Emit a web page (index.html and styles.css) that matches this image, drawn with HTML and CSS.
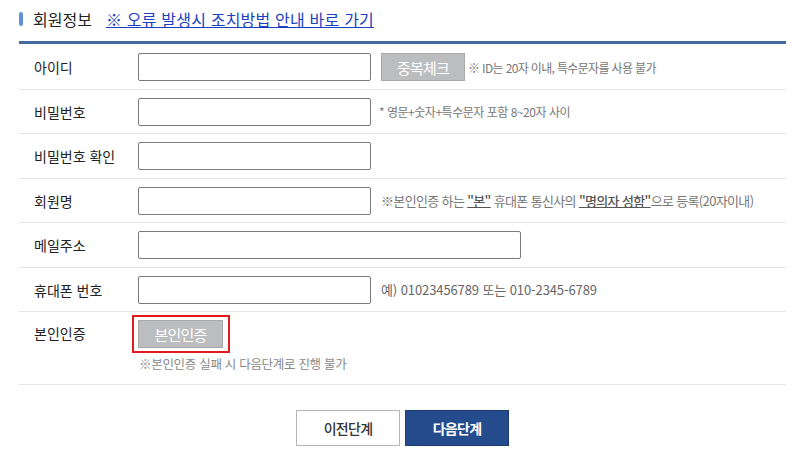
FILE: index.html
```html
<!DOCTYPE html>
<html lang="ko">
<head>
<meta charset="utf-8">
<link rel="stylesheet" href="styles.css">
</head>
<body>
<div class="wrap">
  <div class="head">
    <span class="pill"></span>
    <h2 class="title">회원정보</h2>
    <a class="help" href="#">※ 오류 발생시 조치방법 안내 바로 가기</a>
  </div>
  <div class="form">
    <div class="row first">
      <div class="label">아이디</div>
      <div class="field">
        <input class="inp" type="text">
        <button class="gbtn">중복체크</button>
        <span class="hint sm">※ ID는 20자 이내, 특수문자를 사용 불가</span>
      </div>
    </div>
    <div class="row">
      <div class="label">비밀번호</div>
      <div class="field">
        <input class="inp" type="password">
        <span class="hint sm">* 영문+숫자+특수문자 포함 8~20자 사이</span>
      </div>
    </div>
    <div class="row">
      <div class="label">비밀번호 확인</div>
      <div class="field">
        <input class="inp" type="password">
      </div>
    </div>
    <div class="row">
      <div class="label">회원명</div>
      <div class="field">
        <input class="inp" type="text">
        <span class="hint">※본인인증 하는 <b class="em">"본"</b> 휴대폰 통신사의 <b class="em">"명의자 성함"</b>으로 등록(20자이내)</span>
      </div>
    </div>
    <div class="row">
      <div class="label">메일주소</div>
      <div class="field">
        <input class="inp wide" type="text">
      </div>
    </div>
    <div class="row">
      <div class="label">휴대폰 번호</div>
      <div class="field">
        <input class="inp" type="text">
        <span class="hint num">예) 01023456789 또는 010-2345-6789</span>
      </div>
    </div>
    <div class="row last">
      <div class="label">본인인증</div>
      <div class="field col">
        <span class="focus"><button class="gbtn">본인인증</button></span>
        <span class="note">※본인인증 실패 시 다음단계로 진행 불가</span>
      </div>
    </div>
  </div>
  <div class="nav">
    <button class="nbtn prev">이전단계</button>
    <button class="nbtn next">다음단계</button>
  </div>
</div>
</body>
</html>
```
FILE: styles.css
```css
* { box-sizing: border-box; }
body {
  margin: 0;
  background: #fff;
  font-family: "Noto Sans CJK KR", "Noto Sans", sans-serif;
  color: #222;
}
.wrap {
  margin-left: 19px;
  width: 767px;
}
.head {
  height: 41px;
  display: flex;
  align-items: center;
  padding-bottom: 4px;
}
.pill {
  width: 4px;
  height: 14px;
  border-radius: 2px;
  background: #5f92d6;
  margin-right: 10px;
}
.title {
  margin: 0;
  font-size: 16px;
  font-weight: normal;
  color: #222;
  letter-spacing: 0;
}
.help {
  margin-left: 14px;
  font-size: 16px;
  color: #1c3fbf;
  text-decoration: underline;
  letter-spacing: 0.2px;
}
.form {
  border-top: 3px solid #4468a2;
}
.row {
  display: grid;
  grid-template-columns: 119px 1fr;
  align-items: center;
  padding: 8px 0 7.5px;
  border-bottom: 1px solid #e5e5e5;
}
.row.first { padding-top: 9px; }
.label {
  padding-left: 15px;
  font-size: 14px;
  color: #222;
  letter-spacing: 0;
}
.field {
  display: flex;
  align-items: center;
}
.field.col {
  flex-direction: column;
  align-items: flex-start;
}
.inp {
  width: 233px;
  height: 28px;
  border: 1px solid #7a7a7a;
  border-radius: 2px;
  margin: 0;
  padding: 0 6px;
  background: #fff;
}
.inp.wide { width: 383px; }
.gbtn {
  width: 84px;
  height: 28px;
  margin: 0 0 0 10px;
  padding: 0;
  border: 1px solid #a9a9a9;
  background: #bcbdbf;
  color: #fff;
  font-family: inherit;
  font-size: 15px;
  letter-spacing: -0.05em;
}
.hint {
  margin-left: 10px;
  font-size: 13px;
  color: #777;
  letter-spacing: -0.05em;
}
.hint.sm { font-size: 12px; margin-left: 8px; letter-spacing: -0.04em; }
.hint.num { letter-spacing: -0.1px; color: #666; }
.gbtn + .hint.sm { margin-left: 3px; letter-spacing: -0.65px; }
.em {
  font-weight: 500;
  color: #555;
  text-decoration: underline;
}
.row.last {
  align-items: start;
  padding: 3px 0 11px;
}
.row.last .label { padding-top: 8px; line-height: 20px; }
.focus {
  display: inline-block;
  margin-left: -6px;
  border: 2px solid #e2191f;
  padding: 3px 5px 3px 4px;
  line-height: 0;
}
.focus .gbtn { margin: 0; width: 85px; }
.note {
  margin-top: 2px;
  margin-left: 1px;
  font-size: 12.5px;
  color: #888;
  line-height: 18px;
  letter-spacing: -0.3px;
}
.nav {
  display: flex;
  justify-content: center;
  gap: 5px;
  margin-top: 25px;
}
.nbtn {
  width: 104px;
  height: 36px;
  margin: 0;
  padding: 0;
  font-family: inherit;
  font-size: 14px;
  letter-spacing: -0.05em;
}
.prev {
  background: #fff;
  border: 1px solid #b5b5b5;
  color: #333;
  font-weight: 500;
}
.next {
  background: #244c8d;
  border: 1px solid #1b3d73;
  color: #fff;
  font-weight: bold;
}
```
